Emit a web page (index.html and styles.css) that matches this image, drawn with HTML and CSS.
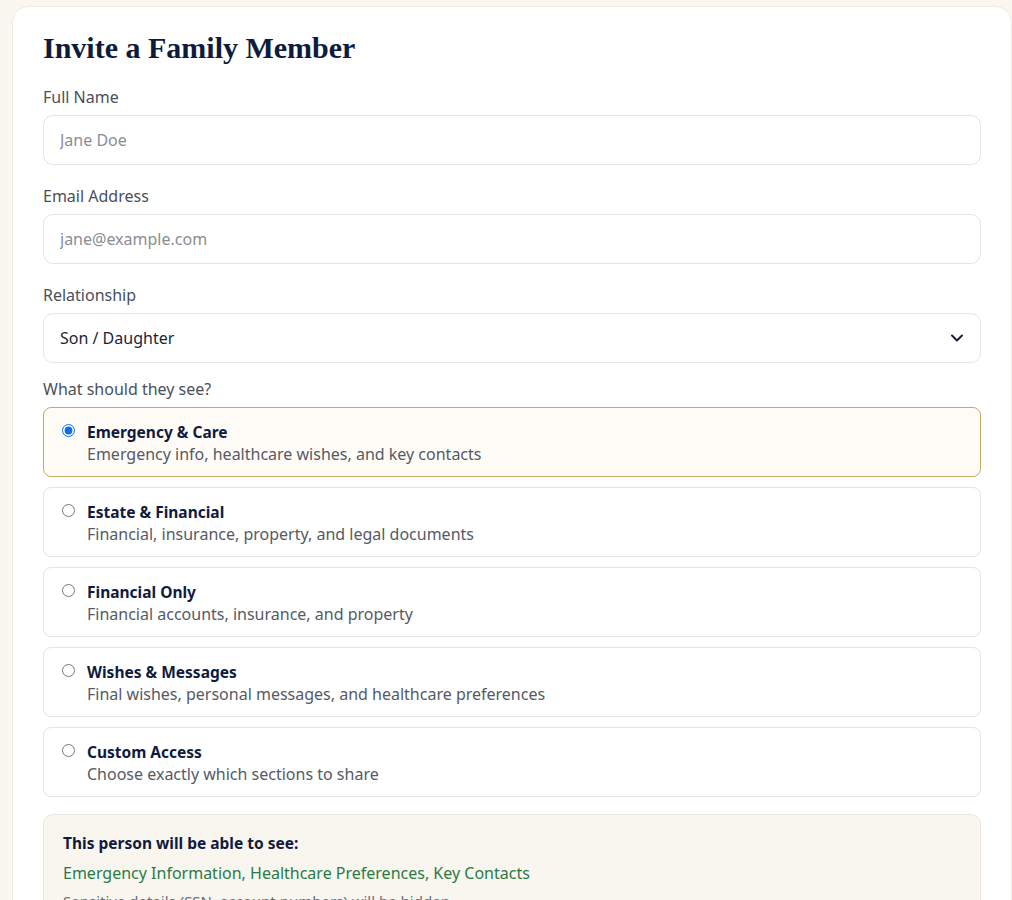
FILE: index.html
```html
<!DOCTYPE html>
<html lang="en">

<head>
    <meta charset="UTF-8">
    <meta name="viewport" content="width=device-width, initial-scale=1.0">
    <title>Invite a Family Member</title>
    <link rel="stylesheet" href="styles.css">
</head>

<body>
    <div class="card">
        <h1>Invite a Family Member</h1>

        <form class="invite-form">
            <div class="field">
                <label for="full-name">Full Name</label>
                <input id="full-name" type="text" placeholder="Jane Doe">
            </div>

            <div class="field">
                <label for="email">Email Address</label>
                <input id="email" type="email" placeholder="jane@example.com">
            </div>

            <div class="field">
                <label for="relationship">Relationship</label>
                <div class="select-wrap">
                    <select id="relationship">
                        <option>Son / Daughter</option>
                        <option>Spouse / Partner</option>
                        <option>Parent</option>
                        <option>Sibling</option>
                        <option>Other</option>
                    </select>
                    <svg class="chevron" width="14" height="14" viewBox="0 0 14 14">
                        <path d="M2 4.5 L7 9.5 L12 4.5" fill="none" stroke="#1a1f3a" stroke-width="2" stroke-linecap="round" stroke-linejoin="round"/>
                    </svg>
                </div>
            </div>

            <div class="field access">
                <span class="label">What should they see?</span>
                <div class="options">
                    <label class="option selected">
                        <input type="radio" name="access" checked>
                        <span class="option-text">
                            <span class="option-title">Emergency &amp; Care</span>
                            <span class="option-desc">Emergency info, healthcare wishes, and key contacts</span>
                        </span>
                    </label>
                    <label class="option">
                        <input type="radio" name="access">
                        <span class="option-text">
                            <span class="option-title">Estate &amp; Financial</span>
                            <span class="option-desc">Financial, insurance, property, and legal documents</span>
                        </span>
                    </label>
                    <label class="option">
                        <input type="radio" name="access">
                        <span class="option-text">
                            <span class="option-title">Financial Only</span>
                            <span class="option-desc">Financial accounts, insurance, and property</span>
                        </span>
                    </label>
                    <label class="option">
                        <input type="radio" name="access">
                        <span class="option-text">
                            <span class="option-title">Wishes &amp; Messages</span>
                            <span class="option-desc">Final wishes, personal messages, and healthcare preferences</span>
                        </span>
                    </label>
                    <label class="option">
                        <input type="radio" name="access">
                        <span class="option-text">
                            <span class="option-title">Custom Access</span>
                            <span class="option-desc">Choose exactly which sections to share</span>
                        </span>
                    </label>
                </div>
            </div>

            <div class="summary">
                <p class="summary-title">This person will be able to see:</p>
                <p class="summary-list">Emergency Information, Healthcare Preferences, Key Contacts</p>
                <p class="summary-note">Sensitive details (SSN, account numbers) will be hidden.</p>
            </div>
        </form>
    </div>
</body>

</html>
```

FILE: styles.css
```css
body {
    font-family: 'Noto Sans', 'Open Sans', sans-serif;
    background-color: #faf7f1;
    margin: 0;
    padding: 6px 0 0 12px;
    color: #1a1f3a;
}

.card {
    background-color: white;
    border: 1px solid #f0ebe0;
    border-radius: 16px;
    padding: 22px 30px 40px 30px;
    width: 1000px;
    box-sizing: border-box;
}

h1 {
    font-family: 'Liberation Serif', 'DejaVu Serif', serif;
    font-size: 30px;
    font-weight: 700;
    color: #0f1b3d;
    margin: 0 0 19px;
    line-height: 38px;
}

.invite-form {
    display: flex;
    flex-direction: column;
    gap: 20px;
}

.field {
    display: flex;
    flex-direction: column;
}

.field.access {
    margin-top: -5px;
}

.field label,
.field .label {
    font-size: 16px;
    color: #4a4f5c;
    line-height: 22px;
    margin-bottom: 7px;
}

.field input[type="text"],
.field input[type="email"],
.field select {
    height: 50px;
    box-sizing: border-box;
    border: 1px solid #e6e4e0;
    border-radius: 10px;
    padding: 0 16px;
    font-family: 'Noto Sans', 'Open Sans', sans-serif;
    font-size: 16px;
    color: #1a1f3a;
    background-color: white;
    outline: none;
}

.field input::placeholder {
    color: #8a8d94;
}

.select-wrap {
    position: relative;
}

.select-wrap select {
    width: 100%;
    appearance: none;
    -webkit-appearance: none;
}

.chevron {
    position: absolute;
    right: 17px;
    top: 18px;
    pointer-events: none;
}

.options {
    display: flex;
    flex-direction: column;
    gap: 10px;
}

.field .option {
    display: flex;
    align-items: flex-start;
    gap: 12px;
    border: 1px solid #e6e4e0;
    border-radius: 8px;
    padding: 13px 17px 10px 17px;
    margin: 0;
    height: 70px;
    box-sizing: border-box;
    cursor: pointer;
}

.field .option.selected {
    border-color: #c9aa62;
    background-color: #fffcf8;
}

.option input[type="radio"] {
    margin: 3px 0 0 1px;
    width: 13px;
    height: 13px;
    accent-color: #0a6ee8;
}

.option-text {
    display: flex;
    flex-direction: column;
}

.option-title {
    font-size: 15.5px;
    font-weight: 700;
    color: #0f1b3d;
    line-height: 22px;
}

.option-desc {
    font-size: 16px;
    color: #555a66;
    line-height: 22px;
}

.summary {
    background-color: #f9f6f0;
    border: 1px solid #ebe7df;
    border-radius: 10px;
    padding: 17px 19px 16px;
    margin-top: -3px;
}

.summary p {
    margin: 0;
    font-size: 16px;
    line-height: 22px;
}

.summary .summary-title {
    font-size: 15.5px;
    font-weight: 700;
    color: #0f1b3d;
    margin-bottom: 8px;
}

.summary .summary-list {
    color: #2b7a45;
    margin-bottom: 6px;
}

.summary .summary-note {
    color: #6b6f78;
    font-size: 15px;
}
```
